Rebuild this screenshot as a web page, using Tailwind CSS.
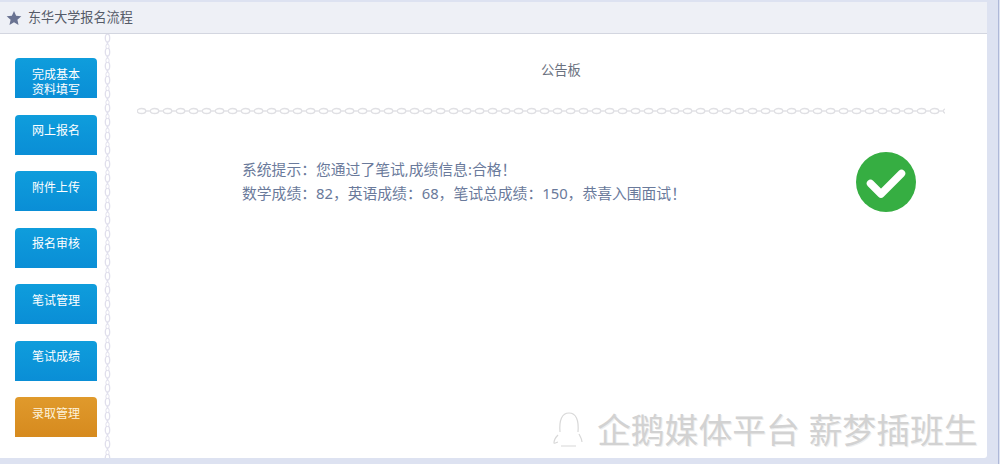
<!DOCTYPE html>
<html lang="zh">
<head>
<meta charset="utf-8">
<script src="https://cdn.jsdelivr.net/npm/@tailwindcss/browser@4"></script>
</head>
<body class="m-0">
<div class="relative w-[1000px] h-[464px] overflow-hidden bg-[#dde2f1] font-['Noto_Sans','Noto_Sans_CJK_SC',sans-serif] pt-[2px] pb-[6px] pr-[13px] flex flex-col">
  <div class="absolute right-[1px] top-0 bottom-0 w-[1px] bg-[#aeb8d8]"></div>
  <header class="h-[32px] shrink-0 flex items-center gap-[6px] pl-[6px] bg-[#eef0f6] border-b border-[#d3d6e0]">
    <svg width="16" height="16" viewBox="0 0 24 24" class="text-[#6a7392]"><path fill="currentColor" d="M12 1.5l3.2 7.2 7.8.8-5.9 5.2 1.7 7.7L12 18.4l-6.8 4 1.7-7.7L1 9.5l7.8-.8z"/></svg>
    <span class="text-[13.1px] text-[#555b68]">东华大学报名流程</span>
  </header>
  <div class="flex-1 flex min-h-0 bg-white rounded-br-[3px]">
    <aside class="w-[104px] shrink-0 pl-[15px] pt-[24px] flex flex-col gap-[16.5px]">
      <div class="w-[82px] h-[40px] rounded-t-[4px] bg-gradient-to-b from-[#0f9ddc] to-[#0a8ed6] text-white text-[12px] leading-[15px] text-center pt-[8.5px]">完成基本<br>资料填写</div>
      <div class="w-[82px] h-[40px] rounded-t-[4px] bg-gradient-to-b from-[#0f9ddc] to-[#0a8ed6] text-white text-[12px] leading-[15px] text-center pt-[8.5px]">网上报名</div>
      <div class="w-[82px] h-[40px] rounded-t-[4px] bg-gradient-to-b from-[#0f9ddc] to-[#0a8ed6] text-white text-[12px] leading-[15px] text-center pt-[8.5px]">附件上传</div>
      <div class="w-[82px] h-[40px] rounded-t-[4px] bg-gradient-to-b from-[#0f9ddc] to-[#0a8ed6] text-white text-[12px] leading-[15px] text-center pt-[8.5px]">报名审核</div>
      <div class="w-[82px] h-[40px] rounded-t-[4px] bg-gradient-to-b from-[#0f9ddc] to-[#0a8ed6] text-white text-[12px] leading-[15px] text-center pt-[8.5px]">笔试管理</div>
      <div class="w-[82px] h-[40px] rounded-t-[4px] bg-gradient-to-b from-[#0f9ddc] to-[#0a8ed6] text-white text-[12px] leading-[15px] text-center pt-[8.5px]">笔试成绩</div>
      <div class="w-[82px] h-[40px] rounded-t-[4px] bg-gradient-to-b from-[#e09a2c] to-[#d68a1e] text-[#fdf3dc] text-[12px] leading-[15px] text-center pt-[8.5px]">录取管理</div>
    </aside>
    <svg width="7" height="424" class="shrink-0">
      <defs><pattern id="cv" width="7" height="14" patternUnits="userSpaceOnUse"><ellipse cx="3.5" cy="4" rx="2.2" ry="4" fill="none" stroke="#e0dfec" stroke-width="1.3"/><path d="M3.5 8v2.5" stroke="#e0dfec" stroke-width="1.6"/><ellipse cx="3.5" cy="12.5" rx="1.6" ry="2.5" fill="none" stroke="#e0dfec" stroke-width="1"/></pattern></defs>
      <rect width="7" height="424" fill="url(#cv)"/>
    </svg>
    <main class="flex-1 min-w-0 flex flex-col">
      <h2 class="m-0 mt-[27px] h-[18px] leading-[18px] text-[13.3px] font-normal text-[#6b7280] pl-[430px]">公告板</h2>
      <svg width="808" height="8" class="ml-[26px] mt-[28px] shrink-0">
        <defs><pattern id="ch" width="13" height="8" patternUnits="userSpaceOnUse"><ellipse cx="4.5" cy="4" rx="4.2" ry="2.5" fill="none" stroke="#e0e0e4" stroke-width="1.4"/><path d="M8.5 4H13" stroke="#e0e0e4" stroke-width="1.4"/></pattern></defs>
        <rect width="808" height="8" fill="url(#ch)"/>
      </svg>
      <div class="flex mt-[37px]">
        <div class="ml-[131px] w-[600px] text-[14.8px] leading-[24px] text-[#6a7a9b] pt-[5px]">
          <p class="m-0 whitespace-nowrap">系统提示：您通过了笔试,成绩信息:合格！</p>
          <p class="m-0 whitespace-nowrap">数学成绩：82，英语成绩：68，笔试总成绩：150，恭喜入围面试！</p>
        </div>
        <svg width="60" height="60" viewBox="0 0 60 60" class="ml-[14px] shrink-0">
          <circle cx="30" cy="30" r="30" fill="#36ae42"/>
          <path d="M14.5 31.5L25 42L45.5 21.5" fill="none" stroke="#fff" stroke-width="7.5" stroke-linecap="round" stroke-linejoin="round"/>
        </svg>
      </div>
    </main>
  </div>
  <div class="absolute left-[552px] top-[410px] flex items-center gap-[12px]">
    <svg width="33" height="40" viewBox="0 0 33 40" fill="none" stroke="#d8d8d8" stroke-width="1.2"><path d="M8 22C7 10 10 3 17 3s10 7 9 19M27 24c1 2 3 5 3 8M6 25c-2 2-4 5-4 8 1 1 3-1 4-1M9 36h15"/></svg>
    <div class="whitespace-nowrap text-[33.8px] leading-[40px] text-[#d2d2d2] [text-shadow:1px_1px_0_#eeeeee]">企鹅媒体平台 薪梦插班生</div>
  </div>
</div>
</body>
</html>
